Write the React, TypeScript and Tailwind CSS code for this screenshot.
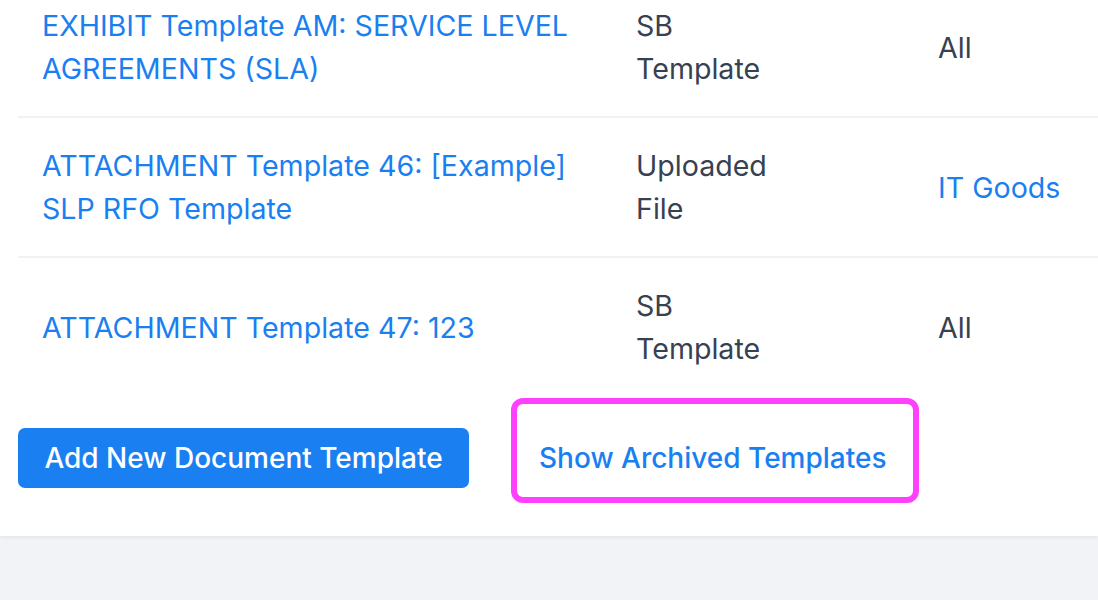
import React from 'react';

type Row = {
  name: string;
  kind: string;
  scope: string;
  scopeLink?: boolean;
};

const rows: Row[] = [
  { name: 'EXHIBIT Template AM: SERVICE LEVEL AGREEMENTS (SLA)', kind: 'SB Template', scope: 'All' },
  { name: 'ATTACHMENT Template 46: [Example] SLP RFO Template', kind: 'Uploaded File', scope: 'IT Goods', scopeLink: true },
  { name: 'ATTACHMENT Template 47: 123', kind: 'SB Template', scope: 'All' },
];

export default function App() {
  return (
    <div
      className="w-[1098px] h-[600px] overflow-hidden bg-[#f2f3f7] text-[28.6px] leading-[43px]"
      style={{ fontFamily: 'Inter, "Noto Sans", sans-serif' }}
    >
      <div className="bg-white -mt-[22px] pb-[33px] shadow-[0_2px_3px_rgba(20,30,60,0.06)]">
        <div className="pl-[18px]">
          {rows.map((r, i) => (
            <div
              key={i}
              className={`grid grid-cols-[596px_300px_1fr] items-center py-[26px] ${i < rows.length - 1 ? 'border-b-2 border-[#f0f0f5]' : ''}`}
            >
              <div className="pl-6">
                <a className="block w-[555px] text-[#1a7ff0] cursor-pointer">{r.name}</a>
              </div>
              <div className="pl-[22px]">
                <div className="w-[150px] text-[#374151]">{r.kind}</div>
              </div>
              <div className="pl-6">
                <span className={r.scopeLink ? 'text-[#1a7ff0]' : 'text-[#374151]'}>{r.scope}</span>
              </div>
            </div>
          ))}
        </div>

        <div className="flex items-start pl-[18px] mt-[2px]">
          <button className="mt-[30px] h-[60px] w-[451px] rounded-[7px] bg-[#1a7ff0] text-white font-medium text-[28px] leading-none">
            Add New Document Template
          </button>
          <div className="ml-[42px] w-[408px] h-[105px] border-[6px] border-[#ff40ff] rounded-[12px] flex items-center pl-[22px] pt-[15px]">
            <span className="text-[#1a7ff0] font-medium text-[28px] leading-none">Show Archived Templates</span>
          </div>
        </div>
      </div>
    </div>
  );
}
